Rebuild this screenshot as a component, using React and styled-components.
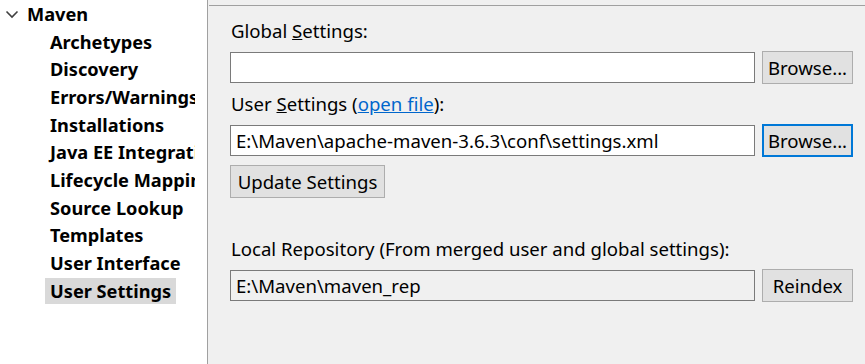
import React from "react";
import styled, { createGlobalStyle, css } from "styled-components";

const GlobalStyle = createGlobalStyle`
  html, body {
    margin: 0;
    padding: 0;
    overflow: hidden;
  }
  body {
    font-family: "Noto Sans", "Open Sans", sans-serif;
    color: #000;
  }
`;

const treeItems = [
  "Archetypes",
  "Discovery",
  "Errors/Warnings",
  "Installations",
  "Java EE Integration",
  "Lifecycle Mappings",
  "Source Lookup",
  "Templates",
  "User Interface",
  "User Settings",
];

function Chevron() {
  return (
    <svg width="14" height="10" viewBox="0 0 14 10">
      <path d="M1.5 2.5 L7 8 L12.5 2.5" fill="none" stroke="#404040" strokeWidth="1.6" />
    </svg>
  );
}

function Mnemonic({ children }) {
  return <u>{children}</u>;
}

export default function App() {
  const selected = "User Settings";
  return (
    <>
      <GlobalStyle />
      <Frame>
        <Sidebar>
          <TreeRow>
            <Twisty>
              <Chevron />
            </Twisty>
            <TreeLabel>Maven</TreeLabel>
          </TreeRow>
          {treeItems.map((item) => (
            <TreeRow key={item}>
              <ChildLabel selected={item === selected}>{item}</ChildLabel>
            </TreeRow>
          ))}
        </Sidebar>
        <Main>
          <Page>
            <Label>
              Global <Mnemonic>S</Mnemonic>ettings:
            </Label>
            <FieldRow>
              <TextField />
              <Button>Browse...</Button>
            </FieldRow>
            <Label>
              User <Mnemonic>S</Mnemonic>ettings (<Link>open file</Link>):
            </Label>
            <FieldRow>
              <TextField>E:\Maven\apache-maven-3.6.3\conf\settings.xml</TextField>
              <Button focused>Browse...</Button>
            </FieldRow>
            <UpdateButton>Update Settings</UpdateButton>
            <Label spaced>Local Repository (From merged user and global settings):</Label>
            <FieldRow>
              <TextField readOnly>E:\Maven\maven_rep</TextField>
              <Button>Reindex</Button>
            </FieldRow>
          </Page>
        </Main>
      </Frame>
    </>
  );
}

const Frame = styled.div`
  display: flex;
  width: 865px;
  height: 364px;
  overflow: hidden;
`;

const Sidebar = styled.div`
  width: 195px;
  padding-right: 12px;
  flex-shrink: 0;
  background: #fff;
  border-right: 1px solid #a0a0a0;
  overflow: hidden;
  white-space: nowrap;
  font-size: 18.2px;
  font-weight: 700;
`;

const TreeRow = styled.div`
  display: flex;
  align-items: center;
  height: 27.7px;
  overflow: hidden;
`;

const Twisty = styled.span`
  display: flex;
  width: 27px;
  padding-left: 5px;
  box-sizing: border-box;
`;

const TreeLabel = styled.span`
  line-height: 26px;
`;

const ChildLabel = styled.span`
  margin-left: 45px;
  padding: 0 5px;
  line-height: 26px;
  ${(props) =>
    props.selected &&
    css`
      background: #d9d9d9;
    `}
`;

const Main = styled.div`
  flex: 1;
  background: #f0f0f0;
  padding-top: 5px;
  padding-left: 1px;
`;

const Page = styled.div`
  border-top: 1px solid #a0a0a0;
  padding: 13px 12px 0 21px;
  font-size: 18.6px;
  display: flex;
  flex-direction: column;
`;

const Label = styled.div`
  height: 24px;
  line-height: 24px;
  margin: ${(props) => (props.spaced ? "39px" : "0")} 0 8px 1px;
  white-space: nowrap;
`;

const Link = styled.span`
  color: #0066cc;
  text-decoration: underline;
`;

const FieldRow = styled.div`
  display: grid;
  grid-template-columns: 1fr 91px;
  gap: 7px;
  align-items: center;
  height: 33px;
  margin-bottom: 8px;
`;

const TextField = styled.div`
  height: 31px;
  box-sizing: border-box;
  border: 1px solid #7a7a7a;
  background: ${(props) => (props.readOnly ? "#f0f0f0" : "#fff")};
  padding: 0 5px;
  line-height: 29px;
  white-space: nowrap;
  overflow: hidden;
`;

const Button = styled.div`
  height: 33px;
  box-sizing: border-box;
  border: 1px solid ${(props) => (props.focused ? "#0078d7" : "#adadad")};
  box-shadow: ${(props) => (props.focused ? "inset 0 0 0 1px #0078d7" : "none")};
  background: #e1e1e1;
  display: flex;
  align-items: center;
  justify-content: center;
`;

const UpdateButton = styled(Button)`
  align-self: flex-start;
  width: 155px;
`;
